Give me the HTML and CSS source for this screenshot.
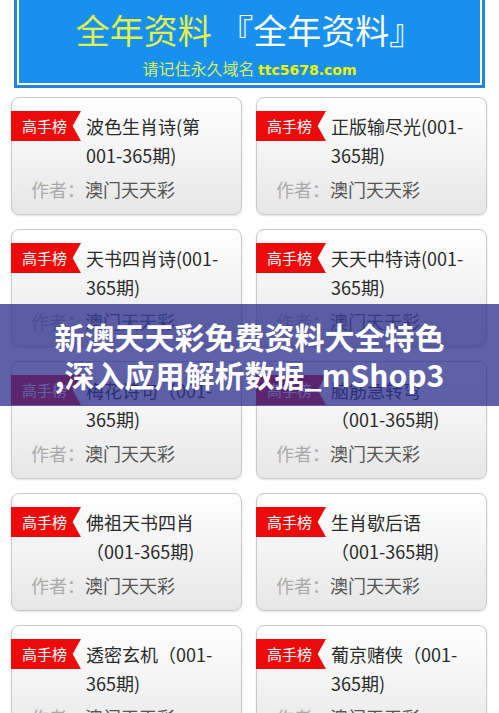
FILE: index.html
```html
<!DOCTYPE html>
<html lang="zh-CN">
<head>
<meta charset="utf-8">
<title>全年资料</title>
<link rel="stylesheet" href="styles.css">
</head>
<body>
<div class="banner">
  <div class="banner-inner">
    <div class="banner-title"><span class="yl">全年资料</span> <span class="wh">『全年资料』</span></div>
    <div class="banner-sub"><span class="sub-cn">请记住永久域名</span> <span class="sub-url">ttc5678.com</span></div>
  </div>
</div>

<div class="grid">
  <div class="card">
    <div class="head"><span class="badge">高手榜</span><div class="title">波色生肖诗(第<br>001-365期)</div></div>
    <div class="author"><span class="lbl">作者：</span>澳门天天彩</div>
  </div>
  <div class="card">
    <div class="head"><span class="badge">高手榜</span><div class="title">正版输尽光(001-<br>365期)</div></div>
    <div class="author"><span class="lbl">作者：</span>澳门天天彩</div>
  </div>
  <div class="card">
    <div class="head"><span class="badge">高手榜</span><div class="title">天书四肖诗(001-<br>365期)</div></div>
    <div class="author"><span class="lbl">作者：</span>澳门天天彩</div>
  </div>
  <div class="card">
    <div class="head"><span class="badge">高手榜</span><div class="title">天天中特诗(001-<br>365期)</div></div>
    <div class="author"><span class="lbl">作者：</span>澳门天天彩</div>
  </div>
  <div class="card">
    <div class="head"><span class="badge">高手榜</span><div class="title">梅花诗句（001-<br>365期)</div></div>
    <div class="author"><span class="lbl">作者：</span>澳门天天彩</div>
  </div>
  <div class="card">
    <div class="head"><span class="badge">高手榜</span><div class="title">脑筋急转弯<br>（001-365期)</div></div>
    <div class="author"><span class="lbl">作者：</span>澳门天天彩</div>
  </div>
  <div class="card">
    <div class="head"><span class="badge">高手榜</span><div class="title">佛祖天书四肖<br>（001-365期)</div></div>
    <div class="author"><span class="lbl">作者：</span>澳门天天彩</div>
  </div>
  <div class="card">
    <div class="head"><span class="badge">高手榜</span><div class="title">生肖歇后语<br>（001-365期)</div></div>
    <div class="author"><span class="lbl">作者：</span>澳门天天彩</div>
  </div>
  <div class="card">
    <div class="head"><span class="badge">高手榜</span><div class="title">透密玄机（001-<br>365期)</div></div>
    <div class="author"><span class="lbl">作者：</span>澳门天天彩</div>
  </div>
  <div class="card">
    <div class="head"><span class="badge">高手榜</span><div class="title">葡京赌侠（001-<br>365期)</div></div>
    <div class="author"><span class="lbl">作者：</span>澳门天天彩</div>
  </div>
</div>

<div class="overlay">
  <div class="ov-line">新澳天天彩免费资料大全特色</div>
  <div class="ov-line">,深入应用解析数据_mShop3</div>
</div>
</body>
</html>
```

FILE: styles.css
```css
html, body {
  margin: 0;
  padding: 0;
  background: #fff;
}
body {
  font-family: "Noto Sans CJK SC", "Microsoft YaHei", sans-serif;
  position: relative;
  height: 713px;
  overflow: hidden;
}

.banner {
  margin: 0 14px;
  border: 3px solid #2384d8;
  border-top: 0;
  padding: 0 2px 2px;
  background: #fff;
}
.banner-inner {
  background: #1890f0;
  height: 83px;
  padding-top: 11px;
  box-sizing: border-box;
  text-align: center;
}
.banner-title {
  font-size: 34px;
  line-height: 38px;
  white-space: nowrap;
}
.banner-title .yl { color: #e1f04a; }
.banner-title .wh { color: #ffffff; }
.banner-sub {
  margin-top: 8px;
  line-height: 22px;
  white-space: nowrap;
}
.sub-cn {
  font-size: 16px;
  color: #d6ee62;
}
.sub-url {
  font-family: "DejaVu Sans", Verdana, sans-serif;
  font-weight: bold;
  font-size: 14px;
  color: #f0f300;
}

.grid {
  display: grid;
  grid-template-columns: 1fr 1fr;
  column-gap: 14px;
  row-gap: 14px;
  padding: 0 12px 0 11px;
  margin-top: 9px;
}
.card {
  height: 118px;
  box-sizing: border-box;
  border: 1px solid #c9c9c9;
  border-radius: 8px;
  background: linear-gradient(#ffffff, #e7e7e7);
  box-shadow: 0 1px 2px rgba(0, 0, 0, 0.12);
  padding-top: 13px;
}
.head {
  display: flex;
  align-items: flex-start;
}
.badge {
  flex: none;
  margin-left: -1px;
  width: 70px;
  height: 30px;
  box-sizing: border-box;
  padding-left: 11px;
  background: #ee0a0a;
  color: #fff;
  font-size: 15px;
  line-height: 30px;
  clip-path: polygon(0 0, 100% 0, 88% 50%, 100% 100%, 0 100%);
}
.title {
  margin-left: 5px;
  margin-top: 1px;
  font-size: 18px;
  line-height: 29px;
  color: #2a2a2a;
  white-space: nowrap;
}
.author {
  margin-top: 5px;
  padding-left: 19px;
  font-size: 18px;
  line-height: 29px;
  color: #555;
  white-space: nowrap;
}
.author .lbl {
  color: #aaaaaa;
}

.overlay {
  position: absolute;
  left: 0;
  right: 0;
  top: 304px;
  height: 102px;
  background: rgba(45, 47, 140, 0.76);
  display: flex;
  flex-direction: column;
  align-items: center;
  justify-content: center;
}
.ov-line {
  color: #fff;
  font-weight: bold;
  font-size: 30px;
  line-height: 38px;
  white-space: nowrap;
}
```
